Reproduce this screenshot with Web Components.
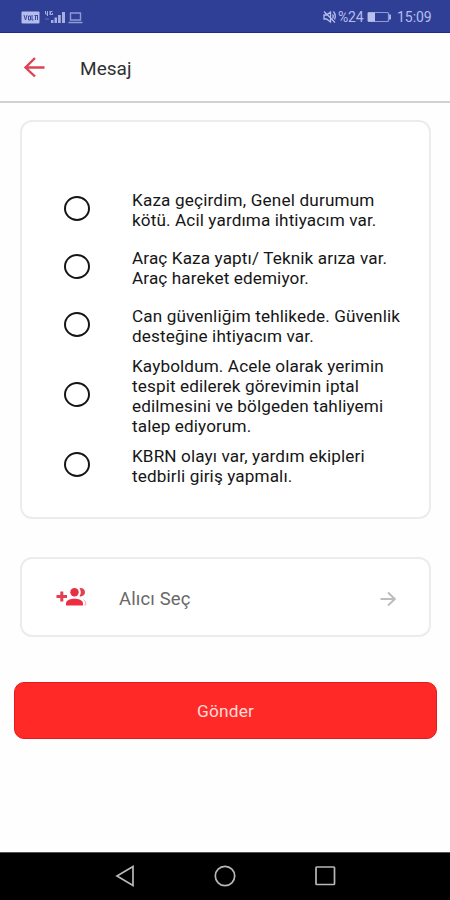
<!DOCTYPE html>
<html lang="tr">
<head>
<meta charset="utf-8">
<title>Mesaj</title>
<style>
html,body{margin:0;height:100%;overflow:hidden}
body{font-family:Roboto,"Liberation Sans",sans-serif;background:#fefefe}
</style>
</head>
<body>
<message-screen></message-screen>
<script>
const define = (name, html, init) => customElements.define(name, class extends HTMLElement {
  constructor() {
    super();
    this.attachShadow({ mode: 'open' }).innerHTML = html;
  }
  connectedCallback() { if (init) init(this, this.shadowRoot); }
});

define('status-bar', `
<style>
:host{display:flex;align-items:center;box-sizing:border-box;height:33px;padding:1px 18px 0 21px;background:#303f96;border-bottom:1px solid #1f2c80;color:#b4bdec;font-size:14px;line-height:16px}
svg{display:block;flex:none}
.space{flex:1}
.pct{margin-left:2px;width:26px;white-space:nowrap;letter-spacing:-.2px}
.bat{margin-left:3px}
.time{margin-left:5px;width:35px;white-space:nowrap;letter-spacing:-.05px}
</style>
<svg width="64" height="16" viewBox="0 0 64 16">
  <rect x=".5" y="2.500" width="18" height="12" rx="1" fill="#b4bdec"/>
  <path d="M3 6l1.500 5L6 6M7.500 7h2v4h-2zM11 6v5h1.500M13.500 6.500h2.500M14.500 6.500v4.500M16.500 6v5" fill="none" stroke="#3d4b9e" stroke-width="1"/>
  <path d="M24.500 2v3h2.500M26.500 2v5M29 2v4M31.500 2.500h-2v3h2v-1.500" fill="none" stroke="#a5afe2" stroke-width="1"/>
  <path d="M24 10h4" stroke="#6672b8"/>
  <path d="M30 11h2.500v3H30zM33.500 8.500H36V14h-2.500zM37 6h2.800v8H37zM41 3h3v11h-3z" fill="#a5afe2"/>
  <path d="M49.500 4h10v7h-10zM47.500 13.500h14" fill="none" stroke="#8f9ad4" stroke-width="1.400"/>
</svg>
<span class="space"></span>
<svg width="13" height="14" viewBox="0 0 13 14"><path d="M1 5h2.500l4-3v10l-4-3H1zM1 1.500l11 11M9.500 4.500q1.500 2 0 4M10.500 1.500q3 4 1 8" fill="none" stroke="#b4bdec" stroke-width="1.300"/></svg>
<span class="pct">%24</span>
<svg class="bat" width="25" height="12" viewBox="0 0 25 12"><rect x="1" y="1.500" width="20.500" height="9" rx="1" fill="none" stroke="#8f9ad8" stroke-width="1.200"/><path d="M1 1.500h7v9H1z" fill="#b9c2ee"/><path d="M23 3.500v5" stroke="#b4bdec" stroke-width="1.800"/></svg>
<span class="time">15:09</span>
`);

define('app-header', `
<style>
:host{display:flex;align-items:center;box-sizing:border-box;height:70px;padding:0 0 1px 23px;background:#fefefe;border-bottom:2px solid #d2d2d2}
svg{display:block}
h1{margin:0 0 0 35px;padding-top:4px;font-size:19px;line-height:24px;font-weight:400;color:#303030;letter-spacing:.05px}
</style>
<svg width="22" height="22" viewBox="0 0 22 22"><path d="M21.500 11.500H3M12 2L2.500 11.500 12 20.500" fill="none" stroke="#dc4355" stroke-width="2.400"/></svg>
<h1><slot></slot></h1>
`);

define('outline-card', `
<style>
:host{display:block;box-sizing:border-box;border:2px solid #ececec;border-radius:12px;background:#fff}
</style><slot></slot>`);

define('message-option', `
<style>
:host{display:flex;align-items:center;height:58px}
:host([tall]){height:82px}
i{box-sizing:border-box;flex:none;width:26px;height:25px;border:2.500px solid #151515;border-radius:50%;margin:0 42px 1px 42px}
div{color:#161616;font-size:17.150px;line-height:19.800px;white-space:nowrap;padding-top:3.500px}
span{display:block}
</style><i></i><div></div>`, (host, root) => {
  const box = root.querySelector('div');
  box.replaceChildren();
  host.getAttribute('lines').split('|').forEach(line => {
    const [text, spacing] = line.split('~');
    const s = document.createElement('span');
    s.textContent = text;
    s.style.letterSpacing = (spacing || 0.12) + 'px';
    box.append(s);
  });
});

define('recipient-row', `
<style>
:host{display:flex;align-items:center;height:100%;padding:0 32px 0 34px;color:#686868;font-size:18.400px;line-height:24px}
svg{display:block;flex:none}
.go{margin-top:3px}
span{flex:1;margin-left:32px;padding-top:3px;letter-spacing:.15px}
</style>
<svg width="31" height="20" viewBox="0 0 31 20">
  <path d="M.5 9.500h10.500M5.800 4.500v10" stroke="#e23f50" stroke-width="3"/>
  <circle cx="18.500" cy="5.200" r="4.200" fill="#e62f42"/>
  <path d="M10 18.500v-2.200c0-3.200 5-4.500 8.500-4.500s8.500 1.300 8.500 4.500v2.200z" fill="#ee2e40"/>
  <path d="M23.500 1.200a4.200 4.200 0 1 1 0 8q2.600-4 0-8z" fill="#e23f50"/>
  <path d="M27.500 12.500q2.800 1.800 2.300 5.500h-1.600" fill="none" stroke="#e5a5aa" stroke-width=".9"/>
</svg>
<span><slot></slot></span>
<svg class="go" width="17" height="16" viewBox="0 0 17 16"><path d="M.5 8h14M8 1.500L14.800 8 8 14.500" fill="none" stroke="#bdbdbd" stroke-width="2"/></svg>
`);

define('send-button', `
<style>
:host{display:block}
button{display:block;box-sizing:border-box;width:100%;height:57px;border:1px solid #e8191c;border-radius:10px;background:#ff2928;color:#ffdcd8;font:400 17.300px/24px Roboto,"Liberation Sans",sans-serif;padding:1px 0 0;letter-spacing:.2px}
</style><button><slot></slot></button>`);

define('navigation-bar', `
<style>
:host{display:flex;align-items:center;justify-content:space-between;box-sizing:border-box;height:48px;padding:0 114px 2px 115px;background:#000;border-top:1px solid #555}
svg{display:block}
svg *{fill:none;stroke:#b8b8b8;stroke-width:1.700}
</style>
<svg width="20" height="22" viewBox="0 0 20 22"><path d="M2 11L18 1.500v19z"/></svg>
<svg width="22" height="22" viewBox="0 0 22 22"><circle cx="11" cy="11" r="9.700"/></svg>
<svg width="21" height="20" viewBox="0 0 21 20"><rect x="1" y="1" width="18.500" height="17.500" rx=".7"/></svg>
`);

define('message-screen', `
<style>
:host{display:flex;flex-direction:column;width:450px;height:900px;background:#fefefe}
main{flex:1;display:flex;flex-direction:column;padding:17px 19px 0 20px}
.options{height:399px;padding-top:58px}
.recipient{height:80px;margin-top:38px}
send-button{margin:45px -6px 0}
</style>
<status-bar></status-bar>
<app-header>Mesaj</app-header>
<main>
  <outline-card class="options">
    <message-option lines="Kaza geçirdim, Genel durumum~0.17|kötü. Acil yardıma ihtiyacım var."></message-option>
    <message-option lines="Araç Kaza yaptı/ Teknik arıza var.|Araç hareket edemiyor."></message-option>
    <message-option lines="Can güvenliğim tehlikede. Güvenlik|desteğine ihtiyacım var."></message-option>
    <message-option tall lines="Kayboldum. Acele olarak yerimin|tespit edilerek görevimin iptal|edilmesini ve bölgeden tahliyemi|talep ediyorum."></message-option>
    <message-option lines="KBRN olayı var, yardım ekipleri|tedbirli giriş yapmalı."></message-option>
  </outline-card>
  <outline-card class="recipient"><recipient-row>Alıcı Seç</recipient-row></outline-card>
  <send-button>Gönder</send-button>
</main>
<navigation-bar></navigation-bar>
`);
</script>
</body>
</html>
